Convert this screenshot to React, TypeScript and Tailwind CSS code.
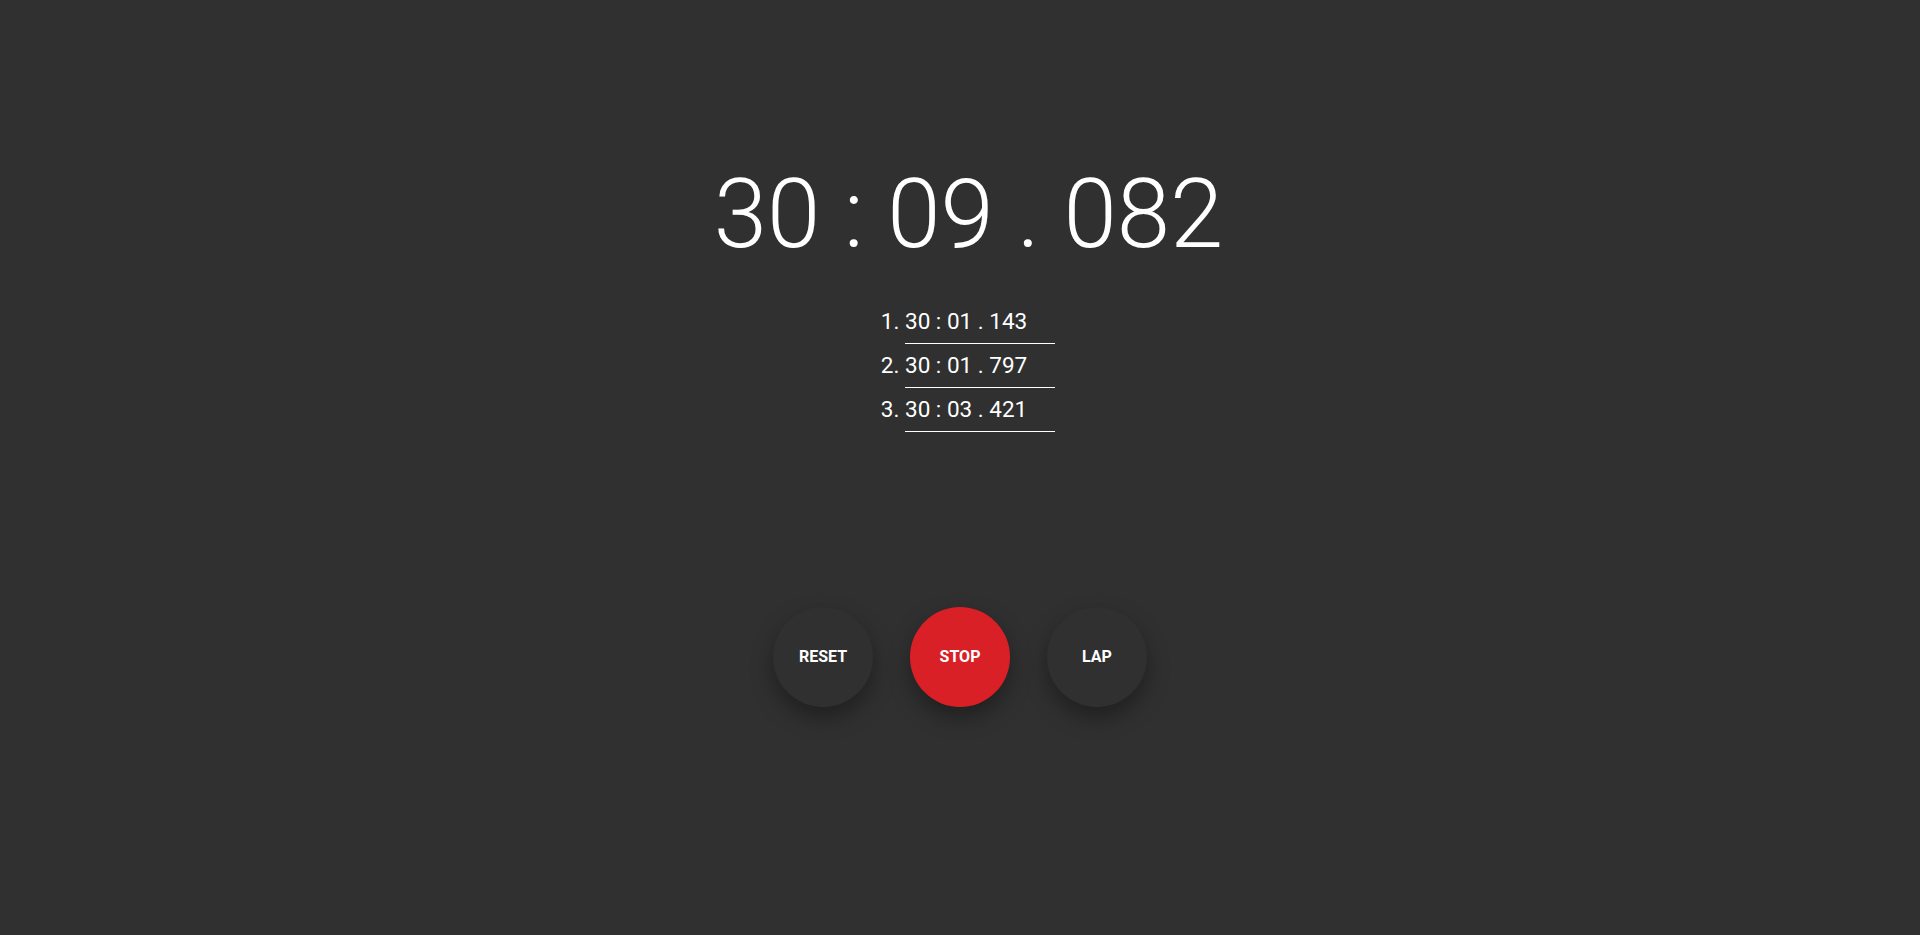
const LAPS = ['30 : 01 . 143', '30 : 01 . 797', '30 : 03 . 421'];

function RoundButton({ label, red }: { label: string; red?: boolean }) {
  return (
    <button
      className={
        red
          ? 'w-[100px] h-[100px] rounded-full bg-[#d92027] text-white font-bold text-[16px] shadow-[0_10px_22px_rgba(0,0,0,0.35)]'
          : 'w-[100px] h-[100px] rounded-full bg-[#303030] text-white font-bold text-[16px] shadow-[0_10px_22px_rgba(0,0,0,0.35)]'
      }
    >
      {label}
    </button>
  );
}

export default function App() {
  return (
    <div className="min-h-[935px] bg-[#303030] text-white font-['Roboto',sans-serif] flex flex-col items-center pt-[166px]">
      <h1 className="text-[96px] font-light leading-none tracking-normal pl-[17px]">30 : 09 . 082</h1>

      <ol className="list-decimal list-outside pl-10 w-[190px] mt-[38px] text-[22.5px]">
        {LAPS.map((lap) => (
          <li key={lap} className="border-b border-white pt-[5px] pb-[6px] leading-[32px]">
            {lap}
          </li>
        ))}
      </ol>

      <div className="flex gap-[37px] mt-[175px]">
        <RoundButton label="RESET" />
        <RoundButton label="STOP" red />
        <RoundButton label="LAP" />
      </div>
    </div>
  );
}
